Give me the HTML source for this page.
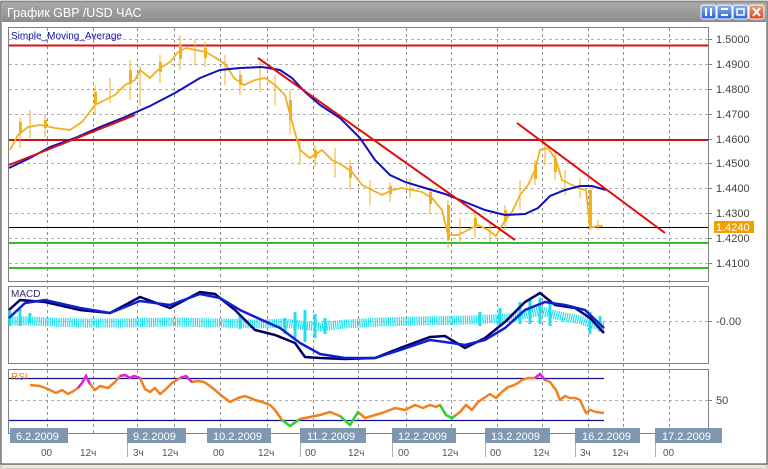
<!DOCTYPE html>
<html><head><meta charset="utf-8"><style>
body{margin:0;width:768px;height:469px;overflow:hidden;background:#d4d0c8;font-family:"Liberation Sans","DejaVu Sans",sans-serif}
svg{display:block}
</style></head><body>
<svg width="768" height="469" viewBox="0 0 768 469" xmlns="http://www.w3.org/2000/svg" font-family="Liberation Sans, DejaVu Sans, sans-serif">
<defs>
<linearGradient id="tb" x1="0" y1="0" x2="0" y2="1"><stop offset="0" stop-color="#a8a8a8"/><stop offset="1" stop-color="#8c8c8c"/></linearGradient>
<linearGradient id="bt" x1="0" y1="0" x2="0" y2="1"><stop offset="0" stop-color="#8fb4f0"/><stop offset="1" stop-color="#2a5ed8"/></linearGradient>
<linearGradient id="bx" x1="0" y1="0" x2="0" y2="1"><stop offset="0" stop-color="#f0a080"/><stop offset="1" stop-color="#d04a20"/></linearGradient>
</defs>
<rect x="0" y="0" width="768" height="469" fill="#d4d0c8"/>
<rect x="1" y="2" width="766" height="462" fill="#fff" stroke="#404040" stroke-width="1"/>
<rect x="2" y="3" width="764" height="19" fill="url(#tb)"/>
<text x="7" y="17" font-size="12.5" fill="#fff">График GBP /USD  ЧАС</text>
<g stroke="#fff" stroke-width="1">
<rect x="701" y="5" width="15" height="14" rx="2" fill="url(#bt)"/>
<rect x="717" y="5" width="15" height="14" rx="2" fill="url(#bt)"/>
<rect x="733" y="5" width="15" height="14" rx="2" fill="url(#bt)"/>
<rect x="749" y="5" width="15" height="14" rx="2" fill="url(#bx)"/>
</g>
<g stroke="#fff" stroke-width="2" fill="none">
<path d="M706 8v8M711 8v8"/><path d="M721 9h7M721 15h7"/><rect x="737" y="9" width="7" height="6" stroke-width="1.5"/><path d="M753 8l7 8M760 8l-7 8"/>
</g>
<rect x="2" y="465" width="764" height="3" fill="#ece9d8"/>

<rect x="8.5" y="27.5" width="700" height="254" fill="#fff" stroke="#808080"/>
<rect x="8.5" y="286.5" width="700" height="77" fill="#fff" stroke="#808080"/>
<rect x="8.5" y="369.5" width="700" height="64" fill="#fff" stroke="#808080"/>

<g stroke="#b0b0b0" stroke-dasharray="3,3" stroke-width="1">
<path d="M9 39.5H708M9 64.5H708M9 89.5H708M9 114.5H708M9 139.5H708M9 163.5H708M9 188.5H708M9 213.5H708M9 238.5H708M9 263.5H708"/>
<path d="M9 321.5H708M9 400.5H708"/>
<path d="M47.5 28V434M93.5 28V434M137.5 28V434M174.5 28V434M220.5 28V434M267.5 28V434M313.5 28V434M358.5 28V434M406.5 28V434M451.5 28V434M497.5 28V434M542.5 28V434M588.5 28V434M623.5 28V434M669.5 28V434" stroke="#909090"/>
</g>
<g stroke="#808080"><path d="M708 39.5h4M708 64.5h4M708 89.5h4M708 114.5h4M708 139.5h4M708 163.5h4M708 188.5h4M708 213.5h4M708 238.5h4M708 263.5h4M708 321.5h4M708 400.5h4"/></g>

<path d="M9 45.5H708" stroke="#dd1010" stroke-width="2"/>
<path d="M9 140H708" stroke="#cc1010" stroke-width="2"/>
<path d="M9 227.5H708" stroke="#000" stroke-width="1"/>
<path d="M9 243H708" stroke="#33bb33" stroke-width="2"/>
<path d="M9 268H708" stroke="#33bb33" stroke-width="2"/>

<g stroke="#f0b020" stroke-width="1" fill="none">
<path d="M20 118v30M30 110v28M45 115v22M95 85v30M110 78v25M130 60v40M140 66v40M160 55v28M180 35v35M195 40v25M205 42v25M225 55v30M240 70v25M260 62v30M275 75v30M290 90v45M300 140v25M315 145v22M335 148v30M350 160v30M370 180v25M390 182v20M410 178v20M430 188v25M448 200v48M460 218v25M475 210v28M490 222v20M505 205v25M520 180v30M535 160v25M545 140v25M555 150v30M565 170v25M580 178v20M590 185v45M598 220v10"/>
</g>
<g fill="#f0b020"><rect x="19" y="122" width="3" height="10"/><rect x="44" y="120" width="3" height="8"/><rect x="94" y="92" width="3" height="12"/><rect x="129" y="70" width="3" height="14"/><rect x="159" y="62" width="3" height="10"/><rect x="179" y="45" width="3" height="14"/><rect x="204" y="48" width="3" height="10"/><rect x="239" y="75" width="3" height="10"/><rect x="289" y="100" width="3" height="20"/><rect x="314" y="150" width="3" height="8"/><rect x="349" y="166" width="3" height="12"/><rect x="389" y="186" width="3" height="8"/><rect x="429" y="192" width="3" height="12"/><rect x="447" y="205" width="3" height="35"/><rect x="474" y="218" width="3" height="10"/><rect x="504" y="210" width="3" height="12"/><rect x="534" y="165" width="3" height="14"/><rect x="554" y="158" width="3" height="14"/><rect x="589" y="190" width="3" height="38"/></g>
<polyline fill="none" stroke="#f0b020" stroke-width="1.8" stroke-linejoin="round" points="10,150 18,135 28,127 40,125 55,128 70,130 82,122 95,105 105,100 115,95 125,85 135,80 140,70 150,78 160,68 170,62 178,52 186,48 196,50 206,52 216,58 226,65 234,78 244,85 255,80 265,78 275,85 285,95 292,122 300,150 310,158 322,150 332,160 342,165 352,172 362,185 372,190 382,195 392,190 402,188 412,190 422,192 432,198 442,210 448,235 458,235 468,230 478,225 488,230 496,236 504,222 512,212 520,195 528,185 535,170 540,150 548,148 556,160 562,180 570,184 578,188 586,190 590,228 598,226 603,226"/>
<polyline fill="none" stroke="#1010c0" stroke-width="2" points="9,168 30,158 50,147 75,138 100,127 125,117 150,106 175,93 200,78 220,70 240,68 262,67 280,70 292,78 305,92 320,105 340,118 360,138 375,160 390,175 405,182 425,188 445,194 465,202 485,210 505,215 525,214 538,208 550,196 565,190 580,186 592,186 606,190"/>
<g stroke="#dd1010" stroke-width="2"><path d="M9 165L135 115"/><path d="M258 58L515 240"/><path d="M517 123L665 233"/></g>

<text x="11" y="39" font-size="10" fill="#1010a0">Simple_Moving_Average</text>

<g font-size="11" fill="#444">
<text x="716" y="43">1.5000</text><text x="716" y="68">1.4900</text><text x="716" y="93">1.4800</text><text x="716" y="118">1.4700</text><text x="716" y="143">1.4600</text><text x="716" y="167">1.4500</text><text x="716" y="192">1.4400</text><text x="716" y="217">1.4300</text><text x="716" y="242">1.4200</text><text x="716" y="267">1.4100</text>
<text x="716" y="325">-0.00</text><text x="716" y="404">50</text>
</g>
<rect x="714" y="221" width="40" height="12" fill="#f0a000"/>
<text x="716" y="231" font-size="11" fill="#fff">1.4240</text>

<polyline fill="none" stroke="#20e0f0" stroke-width="9" stroke-dasharray="1.2,1" points="10,321 30,321 50,322 80,323 120,323 170,322 220,323 260,324 285,323 300,325 320,327 345,324 380,322 420,321 470,320 510,318 540,311 560,316 580,320 600,326 605,326"/>
<path d="M10 311v15M20 309v17M30 313v10M240 315v14M285 318v16M295 312v26M305 310v32M315 314v24M325 318v16M480 312v14M500 308v18M520 302v22M530 300v24M540 298v26M550 304v22M590 312v22M600 316v16" stroke="#20e0f0" stroke-width="3"/>
<polyline fill="none" stroke="#000060" stroke-width="2.5" points="9,310 20,300 45,302 80,310 110,313 140,297 170,308 200,292 215,294 235,310 255,330 275,335 295,343 305,357 320,358 345,359 375,358 400,348 430,337 445,336 465,348 485,338 505,322 525,302 540,293 555,305 575,308 590,318 604,333"/>
<polyline fill="none" stroke="#1020d0" stroke-width="2.5" points="9,318 25,303 45,300 80,308 110,313 140,301 170,305 200,294 220,298 240,310 262,320 280,328 300,343 320,354 345,358 375,358 400,350 430,340 445,342 465,345 485,340 505,328 525,310 545,302 565,305 585,310 604,328"/>
<text x="11" y="297" font-size="10" fill="#303070">MACD</text>

<path d="M9 378.5H604M9 420.5H604" stroke="#101090" stroke-width="1.2"/>
<polyline fill="none" stroke="#f08020" stroke-width="2.5" stroke-linejoin="round" points="30,385 40,386 48,389 56,393 62,390 68,394 72,392 78,388 82,383 86,376 90,384 95,390 100,386 108,388 115,382 120,376 125,375 130,378 134,376 140,378 145,389 150,392 155,388 160,394 165,390 172,383 180,378 186,376 192,382 198,381 204,382 210,386 215,390 222,396 230,402 238,398 245,396 255,400 262,402 270,405 275,410 282,420 290,426 300,419 310,417 320,415 330,412 340,416 350,425 358,412 365,418 375,415 385,412 395,408 405,410 415,405 423,408 430,405 436,407 440,405 446,415 452,418 456,415 460,412 466,405 472,410 478,402 484,398 490,394 496,398 502,392 508,387 512,386 518,383 522,380 528,378 535,378 540,374 545,380 550,382 556,390 560,400 565,396 570,398 575,398 580,400 586,413 590,410 596,412 604,413"/>
<g fill="none" stroke-width="2.5"><polyline stroke="#e020e0" points="78,388 82,383 86,376 90,384"/><polyline stroke="#e020e0" points="120,376 125,375 130,378 134,376 140,378"/><polyline stroke="#e020e0" points="180,378 186,376 192,382"/><polyline stroke="#e020e0" points="535,378 540,374 545,380"/><polyline stroke="#30d030" points="282,420 290,426 300,419"/><polyline stroke="#30d030" points="340,416 350,425 358,412"/><polyline stroke="#30d030" points="440,405 446,415 452,418 456,415"/></g>
<text x="11" y="380" font-size="10" fill="#f08020">RSI</text>

<path d="M9 433.5H708" stroke="#808080"/>
<g fill="#7f98b0"><rect x="10" y="428" width="58" height="15"/><rect x="127" y="428" width="59" height="15"/><rect x="207" y="428" width="64" height="15"/><rect x="300" y="428" width="66" height="15"/><rect x="392" y="428" width="64" height="15"/><rect x="485" y="428" width="65" height="15"/><rect x="575" y="428" width="65" height="15"/><rect x="655" y="428" width="67" height="15"/></g>
<g font-size="11" fill="#fff"><text x="16" y="440">6.2.2009</text><text x="133" y="440">9.2.2009</text><text x="213" y="440">10.2.2009</text><text x="307" y="440">11.2.2009</text><text x="398" y="440">12.2.2009</text><text x="491" y="440">13.2.2009</text><text x="582" y="440">16.2.2009</text><text x="662" y="440">17.2.2009</text></g>
<g stroke="#b0b0b0"><path d="M127.5 443v14M300.5 443v14M392.5 443v14M485.5 443v14M575.5 443v14M655.5 443v14"/></g>
<g font-size="10" fill="#555"><text x="41" y="456">00</text><text x="80" y="456">12ч</text><text x="133" y="456">3ч</text><text x="162" y="456">12ч</text><text x="213" y="456">00</text><text x="258" y="456">12ч</text><text x="305" y="456">00</text><text x="348" y="456">12ч</text><text x="398" y="456">00</text><text x="442" y="456">12ч</text><text x="490" y="456">00</text><text x="533" y="456">12ч</text><text x="580" y="456">3ч</text><text x="612" y="456">12ч</text><text x="663" y="456">00</text></g>
</svg>
</body></html>
